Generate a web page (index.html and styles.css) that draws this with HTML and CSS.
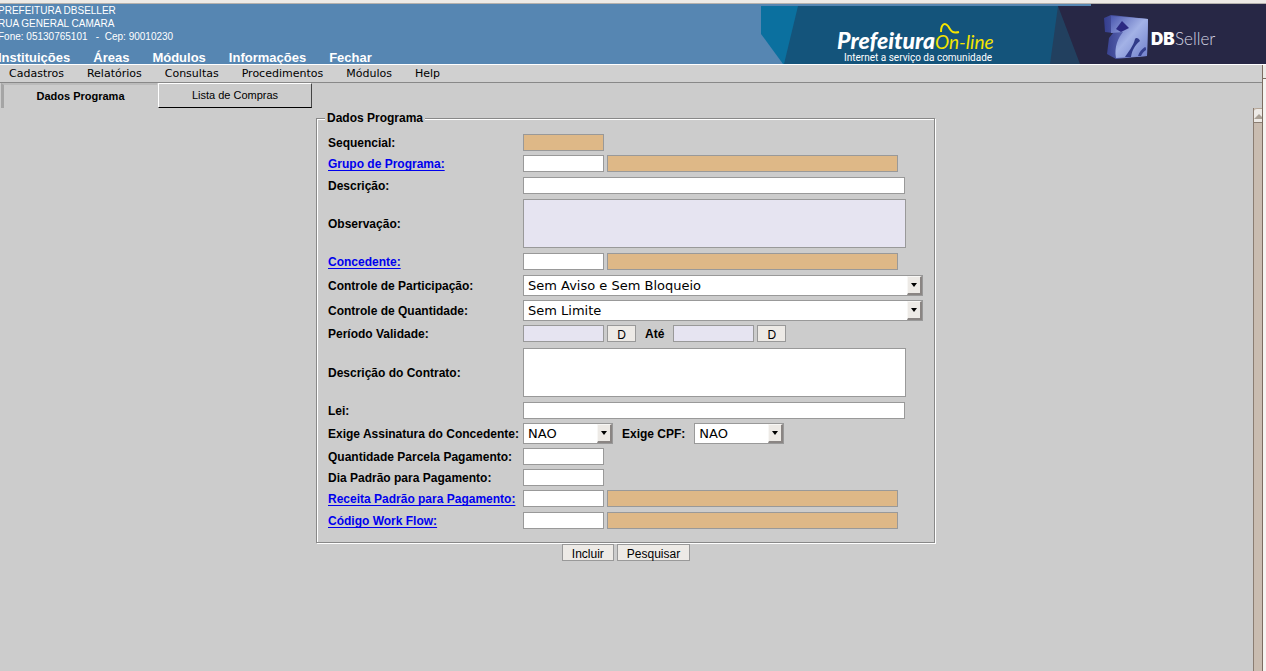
FILE: index.html
```html
<!DOCTYPE html>
<html lang="pt-BR">
<head>
<meta charset="utf-8">
<title>Prefeitura On-line</title>
<link rel="stylesheet" href="styles.css">
</head>
<body>
<header class="top">
  <div class="top-info">
    <address class="org">PREFEITURA DBSELLER<br>RUA GENERAL CAMARA<br>Fone: 05130765101 &nbsp; - &nbsp;Cep: 90010230</address>
    <nav class="main-nav">
      <a href="#">Instituições</a><a href="#">Áreas</a><a href="#">Módulos</a><a href="#">Informações</a><a href="#">Fechar</a>
    </nav>
  </div>
  <svg class="banner" width="505" height="60" viewBox="0 0 505 60" role="img" aria-label="Prefeitura On-line, DBSeller">
    <defs>
      <linearGradient id="face" x1="0" y1="0" x2="1" y2="1">
        <stop offset="0" stop-color="#4b58b0"/><stop offset=".5" stop-color="#a3b2e6"/><stop offset="1" stop-color="#6f7fcb"/>
      </linearGradient>
      <linearGradient id="side" x1="0" y1="0" x2="1" y2="0">
        <stop offset="0" stop-color="#343d8c"/><stop offset="1" stop-color="#8492db"/>
      </linearGradient>
    </defs>
    <path d="M0 2H38L24 60H22L0 30Z" fill="#0b709f"/>
    <path d="M37 2H330V60H23Z" fill="#14547b"/>
    <path d="M297 2H330V60H289Z" fill="#22405f"/>
    <path d="M297 2H330V0H505V60H319Z" fill="#272745"/>
    <path d="M343 14L350 11L387 15L386 52L355 55L346 50L348 34L352 29L344 28Z" fill="url(#side)"/>
    <path d="M350 12L387 15L386 52L355 54C353 43 357 34 362 28L350 29Z" fill="url(#face)"/>
    <path d="M361 17L368 24L360 28L355 25Z" fill="#2c2a82"/>
    <path d="M374 35C375 33 378 34 379 37C374 41 371 46 370 53L364 53C366 50 373 41 374 35Z" fill="#303a89"/>
    <path d="M384 43C385 43 385 45 385 46C382 48 381 50 380 52L377 52C378 48 381 45 384 43Z" fill="#35408f"/>
    <text class="brand" x="76" y="45">Prefeitura</text>
    <text class="online" x="174" y="45">On-line</text>
    <path d="M180 28C180 20 184 18 187 22S190 30 198 28" fill="none" stroke="#f4e400" stroke-width="2"/>
    <text class="slogan" x="83" y="57">Internet a serviço da comunidade</text>
    <text class="db" x="390" y="41">DB</text>
    <text class="seller" x="414" y="41">Seller</text>
  </svg>
</header>
<div class="workspace">
  <main class="frame">
    <nav class="menu">
      <a href="#">Cadastros</a><a href="#">Relatórios</a><a href="#">Consultas</a><a href="#">Procedimentos</a><a href="#">Módulos</a><a href="#">Help</a>
    </nav>
    <div class="tabs">
      <button type="button" class="tab active">Dados Programa</button>
      <button type="button" class="tab">Lista de Compras</button>
    </div>
    <div class="view">
      <form class="form">
        <fieldset>
          <legend>Dados Programa</legend>
          <div class="row"><label for="seq">Sequencial:</label><input id="seq" class="short locked" readonly></div>
          <div class="row spaced"><a href="#" id="l-grupo">Grupo de Programa:</a><div class="controls"><input class="short" aria-labelledby="l-grupo"><input class="name locked" readonly aria-labelledby="l-grupo"></div></div>
          <div class="row spaced"><label for="desc">Descrição:</label><input id="desc" class="long"></div>
          <div class="row spaced"><label for="obs">Observação:</label><textarea id="obs" class="soft"></textarea></div>
          <div class="row spaced"><a href="#" id="l-conc">Concedente:</a><div class="controls"><input class="short" aria-labelledby="l-conc"><input class="name locked" readonly aria-labelledby="l-conc"></div></div>
          <div class="row"><label for="part">Controle de Participação:</label><span class="select"><select id="part"><option>Sem Aviso e Sem Bloqueio</option></select></span></div>
          <div class="row"><label for="quant">Controle de Quantidade:</label><span class="select"><select id="quant"><option>Sem Limite</option></select></span></div>
          <div class="row period"><label for="ini">Período Validade:</label><div class="controls"><input id="ini" class="short soft"><button type="button" class="date">D</button><label class="inline" for="fim">Até</label><input id="fim" class="short soft"><button type="button" class="date">D</button></div></div>
          <div class="row spaced"><label for="contrato">Descrição do Contrato:</label><textarea id="contrato"></textarea></div>
          <div class="row"><label for="lei">Lei:</label><input id="lei" class="long"></div>
          <div class="row"><label for="assin">Exige Assinatura do Concedente:</label><div class="controls"><span class="select small"><select id="assin"><option>NAO</option></select></span><label class="inline" for="cpf">Exige CPF:</label><span class="select small"><select id="cpf"><option>NAO</option></select></span></div></div>
          <div class="row"><label for="parc">Quantidade Parcela Pagamento:</label><input id="parc" class="short"></div>
          <div class="row"><label for="dia">Dia Padrão para Pagamento:</label><input id="dia" class="short"></div>
          <div class="row spaced"><a href="#" id="l-rec">Receita Padrão para Pagamento:</a><div class="controls"><input class="short" aria-labelledby="l-rec"><input class="name locked" readonly aria-labelledby="l-rec"></div></div>
          <div class="row"><a href="#" id="l-flow">Código Work Flow:</a><div class="controls"><input class="short" aria-labelledby="l-flow"><input class="name locked" readonly aria-labelledby="l-flow"></div></div>
        </fieldset>
        <div class="actions"><button type="button">Incluir</button><button type="button">Pesquisar</button></div>
      </form>
      <div class="inner-scroll"><div class="scroll-up"><svg width="8" height="5" viewBox="0 0 8 5"><path d="M0 5L5 0L8 3V5Z" fill="#aaa196"/></svg></div></div>
    </div>
  </main>
  <div class="outer-scroll"><div class="outer-up"></div></div>
</div>
</body>
</html>
```
FILE: styles.css
```css
*, *::before { box-sizing: border-box; }

body {
  margin: 0;
  min-height: 100vh;
  display: flex;
  flex-direction: column;
  overflow: hidden;
  background: #ccc;
  color: #000;
  font: 12px/16px "Liberation Sans", Arial, sans-serif;
}

.top {
  display: flex;
  justify-content: space-between;
  border-top: 3px solid #edeae6;
  border-bottom: 1px solid #fff;
  background: #5686b2;
  color: #fff;
  box-shadow: inset 0 1px #b5b1ad;
  padding-top: 1px;
}
.top-info {
  display: flex;
  flex-direction: column;
  justify-content: space-between;
  margin-left: -2px;
}
.org { font-size: 10px; line-height: 13px; font-style: normal; }
.main-nav { display: flex; gap: 23px; font-size: 13px; line-height: 12px; font-weight: bold; }
.main-nav a { color: #fff; text-decoration: none; }

.banner { display: block; }
.brand { font: italic 900 23px Lato, sans-serif; fill: #fff; }
.online { font: italic 19px Lato, sans-serif; fill: #f4e400; }
.slogan { font: 10px Roboto, sans-serif; fill: #fff; }
.db { font: 900 17px Inter, sans-serif; fill: #fff; }
.seller { font: 300 17px Lato, sans-serif; fill: #d5d5e2; }

.workspace { flex: 1; display: flex; }
.frame { flex: 1; display: flex; flex-direction: column; }

.menu {
  display: flex;
  gap: 23px;
  padding-left: 9px;
  background: #d0d0d0;
  border-bottom: 1px solid #888;
  font: 11px/17px "DejaVu Sans", sans-serif;
}
.menu a { color: #000; text-decoration: none; }

.tabs { display: flex; padding-left: 1px; }
.tab {
  width: 154px;
  height: 25px;
  padding: 0 0 2px;
  border: 1px solid;
  border-color: #fff #444 #000 #fff;
  background: #ccc;
  color: #000;
  font: 11px "Liberation Sans", Arial, sans-serif;
}
.tab.active {
  width: 156px;
  margin-right: 1px;
  border-width: 2px 0 0 3px;
  border-color: #bbb #bbb #bbb #a5a5a5;
  font-weight: bold;
}

.view { flex: 1; display: flex; }
.form {
  flex: 1;
  display: flex;
  flex-direction: column;
  align-items: center;
  padding: 3px 1px 0 0;
}

fieldset {
  margin: 0 1px 1px 0;
  padding: 9px 11px 13px;
  border: 1px solid #888;
  box-shadow: 1px 1px #fff, inset 1px 1px #fff;
  display: flex;
  flex-direction: column;
  gap: 4px;
}
legend {
  margin-left: -3px;
  padding: 0 2px;
  background: #ccc;
  font-weight: bold;
  line-height: 14px;
}

.row { display: grid; grid-template-columns: 195px 400px; align-items: center; }
.row.spaced { padding-bottom: 1px; }
.row.period { padding-bottom: 2px; }
.row label, .row a {
  padding-top: 2px;
  line-height: 15px;
  font-weight: bold;
  white-space: nowrap;
}
.row a {
  justify-self: start;
  color: #00e;
  text-underline-offset: 2px;
  text-decoration-skip-ink: none;
}
.controls { display: flex; gap: 3px; align-items: center; }
.row .inline { margin: 0 6px; }

input, textarea, select {
  margin: 0;
  border: 1px solid #999;
  border-radius: 0;
  background: #fff;
  font: 12px "Liberation Sans", Arial, sans-serif;
}
input { height: 17px; padding: 0 2px; }
.short { width: 81px; }
.name { width: 291px; }
.long { width: 382px; }
textarea { display: block; width: 383px; height: 49px; padding: 2px; resize: none; }
.locked { background: #deb887; }
.soft { background: #e6e4f1; }

.select { position: relative; display: block; width: 400px; }
.select.small { width: 90px; }
.select select {
  display: block;
  appearance: none;
  width: 100%;
  height: 21px;
  padding: 0 18px 0 4px;
  color: #000;
  font: 13px "DejaVu Sans", sans-serif;
}
.select::before {
  content: "";
  position: absolute;
  top: 1px;
  right: 1px;
  bottom: 1px;
  width: 15px;
  background: #edeae6;
  border: 1px solid;
  border-width: 1px 2px 2px 1px;
  border-color: #f8f7f5 #8a8583 #8a8583 #f8f7f5;
  pointer-events: none;
}
.select::after {
  content: "";
  position: absolute;
  top: 8px;
  right: 6px;
  border: 3px solid transparent;
  border-top: 4px solid #000;
  border-bottom: 0;
  pointer-events: none;
}

.date, .actions button {
  height: 17px;
  padding: 2px 0 0;
  border: 1px solid #999;
  background: #edeae6;
  color: #000;
  font: 12px/15px "Liberation Sans", Arial, sans-serif;
}
.date { width: 29px; }
.actions { display: flex; gap: 3px; }
.actions button { padding: 2px 9px 0; }

.inner-scroll {
  width: 9px;
  border-left: 1px solid #8a7d72;
  background: #c9bcb0;
}
.scroll-up {
  height: 15px;
  padding-top: 5px;
  background: #edeae6;
  border-top: 1px solid #b5a698;
  border-bottom: 1px solid #8a7d72;
  border-top-left-radius: 3px;
}
.scroll-up svg { display: block; }
.outer-scroll { width: 4px; background: #f6f4f1; border-left: 1px solid #7c6c60; }
.outer-up {
  height: 14px;
  background: #edeae6;
  border-bottom: 1px solid #7c6c60;
  border-top-left-radius: 3px;
}
```
